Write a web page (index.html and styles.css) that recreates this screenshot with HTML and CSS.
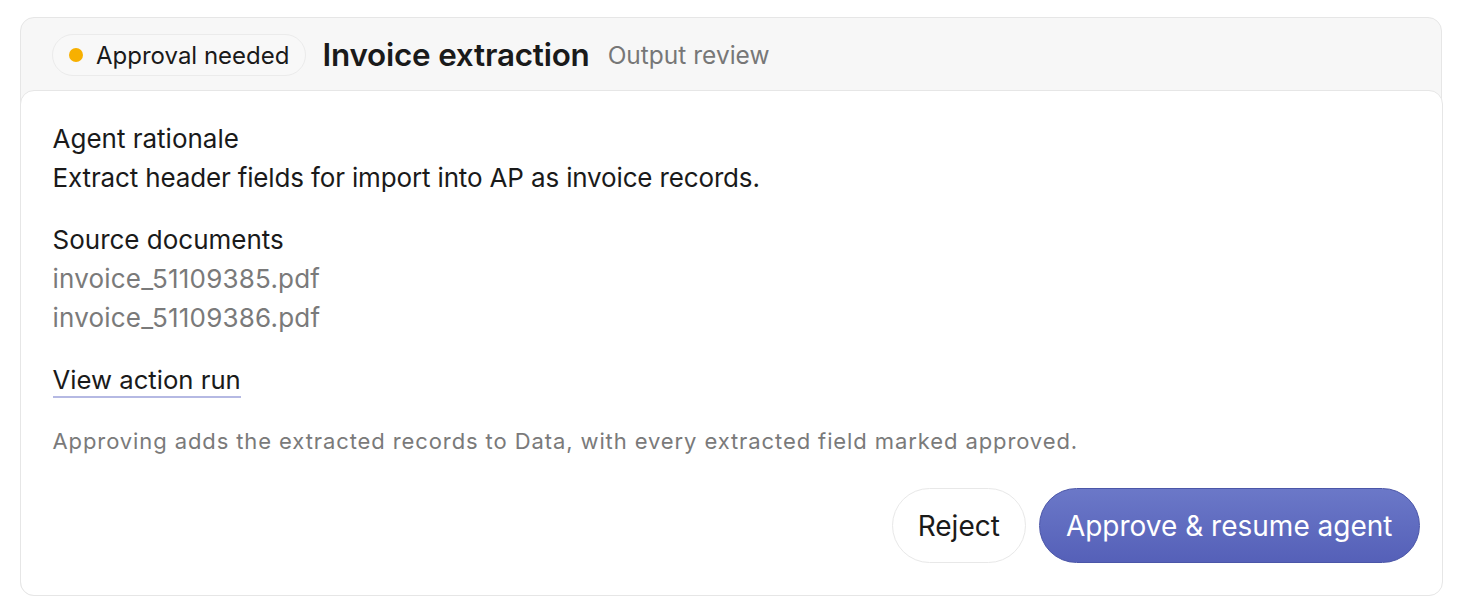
FILE: index.html
```html
<!DOCTYPE html>
<html lang="en">
<head>
<meta charset="utf-8">
<title>Invoice extraction</title>
<link rel="stylesheet" href="styles.css">
</head>
<body>
<div class="card">
  <div class="card-header">
    <span class="badge"><span class="dot"></span>Approval needed</span>
    <h1 class="title">Invoice extraction</h1>
    <span class="subtitle">Output review</span>
  </div>
  <div class="panel">
    <section class="section">
      <div class="label">Agent rationale</div>
      <div class="text">Extract header fields for import into AP as invoice records.</div>
    </section>
    <section class="section">
      <div class="label">Source documents</div>
      <div class="muted">invoice_51109385.pdf</div>
      <div class="muted">invoice_51109386.pdf</div>
    </section>
    <section class="section">
      <a class="link" href="#">View action run</a>
    </section>
    <p class="note">Approving adds the extracted records to Data, with every extracted field marked approved.</p>
    <div class="actions">
      <button class="btn btn-secondary">Reject</button>
      <button class="btn btn-primary">Approve &amp; resume agent</button>
    </div>
  </div>
</div>
</body>
</html>
```

FILE: styles.css
```css
* { box-sizing: border-box; }
html, body { margin: 0; padding: 0; background: #ffffff; }
body {
  font-family: Inter, "Noto Sans", sans-serif;
  color: #1a1a1a;
  padding: 17px 20px 0 20px;
}
.card {
  width: 1422px;
  background: #f7f7f7;
  border: 1.5px solid #e6e6e6;
  border-radius: 14px;
}
.card-header {
  display: flex;
  align-items: center;
  height: 72px;
  padding: 2px 0 0 31px;
}
.badge {
  display: inline-flex;
  align-items: center;
  height: 42px;
  padding: 0 16px 0 16px;
  border: 1.5px solid #ebebeb;
  border-radius: 21px;
  background: #f8f8f8;
  font-size: 24px;
  color: #1a1a1a;
}
.dot {
  width: 14px;
  height: 14px;
  border-radius: 50%;
  background: #f7b000;
  margin-right: 13px;
}
.title {
  margin: 0 0 0 16px;
  font-size: 31.4px;
  font-weight: 600;
  color: #1a1a1a;
  letter-spacing: -0.2px;
}
.subtitle {
  margin-left: 18px;
  font-size: 24.5px;
  color: #777777;
}
.panel {
  margin: 0 -1.5px -1.5px -1.5px;
  background: #ffffff;
  border: 1.5px solid #e6e6e6;
  border-radius: 14px;
  padding: 28px 22px 32px 32px;
}
.section { margin-bottom: 23px; }
.label, .text, .muted, .link {
  font-size: 26px;
  line-height: 39px;
}
.label { color: #1a1a1a; }
.text { color: #1a1a1a; letter-spacing: -0.15px; }
.muted { color: #7a7a7a; letter-spacing: 0.2px; }
.link {
  color: #1a1a1a;
  text-decoration: none;
  border-bottom: 2px solid #b5b9e3;
  padding-bottom: 1px;
  font-size: 25.7px;
}
.note {
  margin: 2px 0 0 0;
  font-size: 22px;
  line-height: 39px;
  color: #7a7a7a;
  letter-spacing: 0.9px;
}
.actions {
  display: flex;
  justify-content: flex-end;
  gap: 13px;
  margin-top: 27px;
}
.btn {
  font-family: Inter, "Noto Sans", sans-serif;
  font-size: 28px;
  height: 75px;
  border-radius: 38px;
  padding: 0 25px;
  cursor: pointer;
}
.btn-secondary {
  background: #ffffff;
  color: #1a1a1a;
  border: 1.5px solid #e8e8e8;
}
.btn-primary {
  background: linear-gradient(#6b78c8, #5560b8);
  color: #ffffff;
  border: 1.5px solid #4b56a8;
  padding: 0 26px;
}
```
